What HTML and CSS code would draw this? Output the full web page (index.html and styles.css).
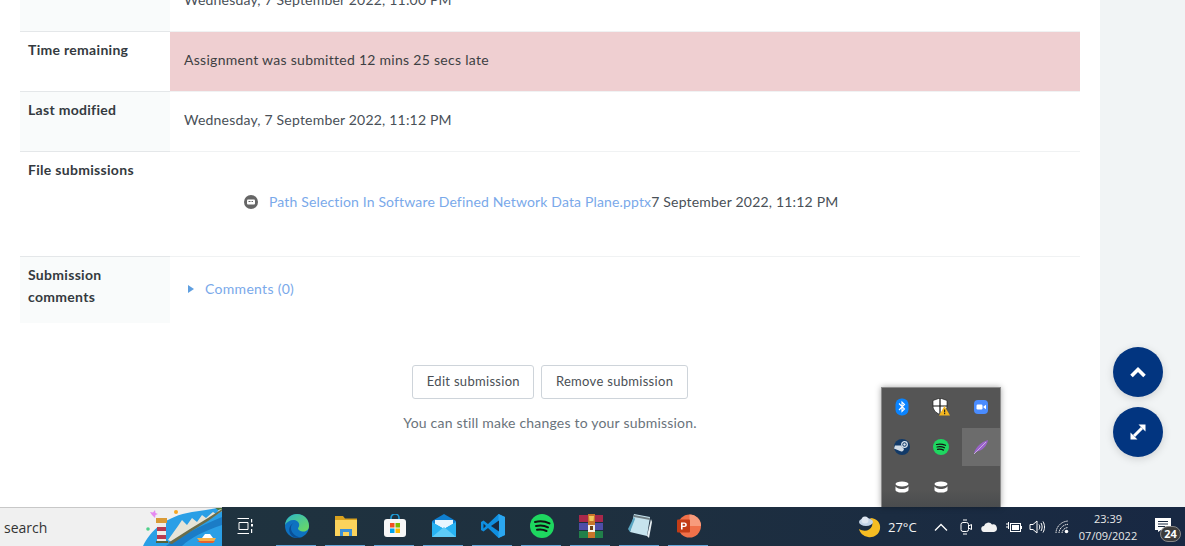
FILE: index.html
```html
<!DOCTYPE html>
<html lang="en">
<head>
    <meta charset="UTF-8">
    <title>Assignment submission</title>
    <link rel="stylesheet" href="styles.css">
</head>
<body>
    <div class="page">
        <div class="content">
            <table class="status">
                <tr class="row-first">
                    <th class="tint"></th>
                    <td>Wednesday, 7 September 2022, 11:00 PM</td>
                </tr>
                <tr>
                    <th>Time remaining</th>
                    <td class="late">Assignment was submitted 12 mins 25 secs late</td>
                </tr>
                <tr>
                    <th class="tint">Last modified</th>
                    <td>Wednesday, 7 September 2022, 11:12 PM</td>
                </tr>
                <tr class="row-files">
                    <th>File submissions</th>
                    <td>
                        <div class="file">
                            <svg class="file-icon" viewBox="0 0 14 14"><circle cx="7" cy="7" r="7" fill="#666"/><rect x="3" y="4.500" width="8" height="5" rx="1" fill="#fff"/><rect x="4.500" y="6" width="2" height="1" fill="#666"/><rect x="7.500" y="6" width="1.500" height="1" fill="#666"/></svg>
                            <a href="#">Path Selection In Software Defined Network Data Plane.pptx</a><span>7 September 2022, 11:12 PM</span>
                        </div>
                    </td>
                </tr>
                <tr class="row-comments">
                    <th class="tint">Submission<br>comments</th>
                    <td><a class="comments" href="#"><i class="caret"></i>Comments (0)</a></td>
                </tr>
            </table>
            <div class="actions">
                <button>Edit submission</button>
                <button>Remove submission</button>
            </div>
            <p class="hint">You can still make changes to your submission.</p>
        </div>
        <div class="side"></div>
    </div>

    <a class="fab fab-top" href="#"><svg viewBox="0 0 16 12" width="16" height="12"><path d="M1.500 10 8 3.500l6.500 6.500" fill="none" stroke="#fff" stroke-width="3.600"/></svg></a>
    <a class="fab fab-expand" href="#"><svg viewBox="0 0 16 16" width="16" height="16"><path d="M4 12 12 4" stroke="#fff" stroke-width="3"/><path d="M8.500 .500H15.500V7.500zM.500 8.500V15.500H7.500z" fill="#fff"/></svg></a>

    <div class="tray-popup">
        <div class="tray-cell"><svg viewBox="0 0 14 18" width="14" height="18"><rect width="13" height="17" x=".5" y=".5" rx="6" fill="#0a84ff"/><path d="M4 5.500 9.500 11 7 13.500V4L9.500 6.500 4 12" fill="none" stroke="#fff" stroke-width="1.100"/></svg></div>
        <div class="tray-cell"><svg viewBox="0 0 18 18" width="18" height="18"><path d="M7 0 14 2.500V8C14 12 11 15 7 16.500 3 15 0 12 0 8V2.500z" fill="#fff" stroke="#111" stroke-width=".6" transform="translate(1 0)"/><path d="M8 0V16M1 8H15" stroke="#111" stroke-width="1.200"/><path d="M12.500 8 18 17.500H7z" fill="#f3b61f"/><rect x="12" y="11.500" width="1.200" height="3" fill="#222"/><rect x="12" y="15" width="1.200" height="1.200" fill="#222"/></svg></div>
        <div class="tray-cell"><svg viewBox="0 0 14 14" width="14" height="14"><rect width="14" height="14" rx="4" fill="#4a8cff"/><rect x="2.500" y="4.500" width="6" height="5" rx="1.200" fill="#fff"/><path d="M9.500 6.500 12 4.800V9.200L9.500 7.500z" fill="#fff"/></svg></div>
        <div class="tray-cell"><svg viewBox="0 0 16 16" width="16" height="16"><circle cx="8" cy="8" r="8" fill="#123a68"/><path d="M0 9.500 6 12a2.600 2.600 0 0 0 4-2L7 6.500 1 6.500z" fill="#e8eef4" opacity=".9"/><circle cx="10.500" cy="5.500" r="2.800" fill="none" stroke="#dfe8f0" stroke-width="1.200"/><circle cx="10.500" cy="5.500" r="1.200" fill="#dfe8f0"/></svg></div>
        <div class="tray-cell"><svg viewBox="0 0 16 16" width="16" height="16"><circle cx="8" cy="8" r="8" fill="#1ed760"/><path d="M3.500 5.500C6.500 4.700 9.500 5 12.500 6.300M4 8C6.500 7.400 9 7.600 11.500 8.800M4.500 10.400C6.500 10 8.500 10.100 10.500 11.100" fill="none" stroke="#121212" stroke-width="1.200" stroke-linecap="round"/></svg></div>
        <div class="tray-cell tray-active"><svg viewBox="0 0 16 16" width="16" height="16"><path d="M1 14C3 8 8 3 15 1 14 7 9 12 4 12.500z" fill="#9a63c9"/><path d="M1 15 13 3" stroke="#d8bff0" stroke-width=".8"/></svg></div>
        <div class="tray-cell"><svg class="db" viewBox="0 0 14 12" width="14" height="12"><ellipse cx="7" cy="3" rx="6.500" ry="2.600" fill="#fff"/><path d="M.500 5v4c0 1.500 3 2.600 6.500 2.600s6.500-1.100 6.500-2.600V5c0 1.500-3 3-6.500 3S.500 6.500.500 5z" fill="#fff"/></svg></div>
        <div class="tray-cell"><svg class="db" viewBox="0 0 14 12" width="14" height="12"><ellipse cx="7" cy="3" rx="6.500" ry="2.600" fill="#fff"/><path d="M.500 5v4c0 1.500 3 2.600 6.500 2.600s6.500-1.100 6.500-2.600V5c0 1.500-3 3-6.500 3S.500 6.500.500 5z" fill="#fff"/></svg></div>
    </div>

    <div class="taskbar">
        <div class="search">
            <span>search</span>
            <svg class="beach" viewBox="0 0 80 39" width="80" height="39">
                <path d="M1 39C8 24 24 9 50 5 62 3 72 2 80 0V39z" fill="#2a9fe6"/>
                <path d="M24 39C36 30 56 20 80 10V18C62 24 48 31 40 39z" fill="#1b7cc6"/>
                <path d="M26 33 36 19 40 13 45 18 50 11 55 15 60 8 64 11 71 5 74 7 78 1 80 2V4L66 13 48 24 30 35z" fill="#e6e4d8"/>
                <path d="M26 36 48 22 66 11 80 2V4L66 14 48 25 30 37z" fill="#6b6d4a"/>
                <path d="M72 0H80V2L76 3z" fill="#4f7a3a"/>
                <rect x="15" y="12" width="9" height="23" fill="#f1ece6"/>
                <rect x="15" y="20" width="9" height="4" fill="#b83a50"/>
                <rect x="15" y="28" width="9" height="4" fill="#b83a50"/>
                <rect x="14" y="11" width="11" height="5" fill="#d99a36"/>
                <rect x="14" y="34" width="12" height="2" fill="#55633a"/>
                <path d="M10 8 8 5 11 5.500 13 3 13.500 6 16 7 13.500 8 13 11 11 9z" fill="#e58af0"/>
                <circle cx="34" cy="5" r="2" fill="#f5a623"/>
                <circle cx="6" cy="22" r="1.800" fill="#4fd08a"/>
                <path d="M55 31H74L71 36H59z" fill="#f7b24a"/>
                <path d="M60 31 63 27H68L71 31z" fill="#fff"/>
                <path d="M55 34H73L71 36H59z" fill="#e8622c"/>
            </svg>
        </div>
        <div class="apps">
            <div class="app app-first"><svg viewBox="0 0 16 16" width="16" height="16"><path d="M0.500 .500H12M0.500 15.500H12M2 4.500H11V11.500H2z" fill="none" stroke="#fff"/><rect x="14" y="1" width="1.200" height="3.500" fill="#fff"/><rect x="14" y="6" width="2" height="2.500" fill="#fff"/><rect x="14" y="11" width="1.200" height="4" fill="#fff"/></svg></div>
            <div class="app on"><svg viewBox="0 0 24 24" width="24" height="24"><defs><linearGradient id="edge" x1="0" y1="0" x2="1" y2="1"><stop offset="0" stop-color="#2cb6c8"/><stop offset="1" stop-color="#6fdc5c"/></linearGradient></defs><circle cx="12" cy="12" r="12" fill="#0e71c0"/><path d="M0 11C1 4 6 0 12 0c7 0 12 5 12 12 0 3-2 5.500-5.500 5.500-3 0-5.500-1.500-5.500-3 0-1 1.200-1.500 1.200-3.500C14.200 7.500 11 6 8.500 6 5 6 1.500 8 0 11z" fill="url(#edge)"/><path d="M9 9c-3 1-4 5-2 9 2 3.500 6 5 9 5.500-5 1.500-9-.5-11-4-2-4-.5-9 4-10.500z" fill="#0a4f96"/></svg></div>
            <div class="app on"><svg viewBox="0 0 24 22" width="24" height="22"><path d="M1 1H9L11 3.500H23V8H1z" fill="#d9a21f"/><rect x="1" y="5" width="22" height="16" fill="#fbd35c"/><path d="M6 21V14H18V21H15V17H9V21z" fill="#3a8fd8"/></svg></div>
            <div class="app on"><svg viewBox="0 0 24 24" width="24" height="24"><path d="M8 6V4a4 4 0 0 1 8 0v2" fill="none" stroke="#1e9bd6" stroke-width="1.600"/><rect x="1" y="5" width="22" height="18" rx="3" fill="#f7f7f7"/><rect x="7" y="9" width="4.500" height="4.500" fill="#f25022"/><rect x="12.500" y="9" width="4.500" height="4.500" fill="#7fba00"/><rect x="7" y="14.500" width="4.500" height="4.500" fill="#00a4ef"/><rect x="12.500" y="14.500" width="4.500" height="4.500" fill="#ffb900"/></svg></div>
            <div class="app on"><svg viewBox="0 0 24 23" width="24" height="23"><path d="M12 0 24 7V9L12 16 0 9V7z" fill="#0f7fd0"/><path d="M3 6H21V10L12 15 3 10z" fill="#e8f6ff"/><path d="M0 8 12 15 24 8V23H0z" fill="#27b2f2"/><path d="M0 23 12 13 24 23z" fill="#5ecbf7"/></svg></div>
            <div class="app on"><svg viewBox="0 0 24 24" width="24" height="24"><path d="M17.500 0 24 3V21L17.500 24 7 14 2.500 17.500 0 16V8L2.500 6.500 7 10z" fill="#0f8fe0"/><path d="M17.500 0 24 3V21L17.500 24z" fill="#2ba6ef"/><path d="M18 6.500V17.500L10 12z" fill="#1b1f2d" opacity=".9"/><path d="M2.500 9.500V14.500L5 12z" fill="#1b2a3c"/></svg></div>
            <div class="app on"><svg viewBox="0 0 24 24" width="24" height="24"><circle cx="12" cy="12" r="12" fill="#1ed760"/><path d="M5 8C10 6.700 15 7.200 19.500 9.400M6 12C10 11 14.500 11.400 18 13.300M7 15.800C10.500 15.100 13.500 15.500 16.500 17" fill="none" stroke="#121212" stroke-width="2" stroke-linecap="round"/></svg></div>
            <div class="app on"><svg viewBox="0 0 24 24" width="24" height="24"><rect width="24" height="7" y="1" fill="#a8284a"/><rect width="24" height="7" y="9" fill="#4f4da8"/><rect width="24" height="7" y="17" fill="#21804a"/><rect x="9" y="0" width="7" height="24" fill="#c9752a"/><path d="M10 2H15L14.500 7H10.500z" fill="#f0c75c"/><rect x="9" y="11" width="7" height="7" fill="#f3efe4"/><rect x="11" y="12" width="3" height="4" fill="#6d4018"/></svg></div>
            <div class="app on"><svg viewBox="0 0 24 24" width="24" height="24"><path d="M6 0 22 3 19 22 2 18z" fill="#c7e4ee"/><path d="M6 1 21.500 4 22 6 6 3z" fill="#6f7d82"/><path d="M2 18 0 15 6 3 7 5z" fill="#5ba6c2"/><path d="M19 22 23 5 24 8 21 24z" fill="#e8eff2"/></svg></div>
            <div class="app on"><svg viewBox="0 0 24 24" width="24" height="24"><circle cx="12.500" cy="12" r="11.500" fill="#f0714a"/><path d="M12.500 .500A11.500 11.500 0 0 1 24 12H12.500z" fill="#f79b7c"/><rect x="0" y="5.500" width="13" height="13" rx="1" fill="#c33c16"/><path d="M4 15.500V8.500H7.300C9 8.500 9.800 9.500 9.800 10.700 9.800 12 9 13 7.300 13H5.600V15.500zM5.600 9.800V11.700H7C7.800 11.700 8.200 11.300 8.200 10.700 8.200 10.200 7.800 9.800 7 9.800z" fill="#fff"/></svg></div>
        </div>
        <div class="systray">
            <svg class="weather" viewBox="0 0 24 24" width="24" height="24"><path d="M13 3C20 3 24 8 23 14 22 20 16 23 11 22 6 21 3 18 2 14 7 17 13 16 15 11 16 8 15 5 13 3z" fill="#f6bd23"/><ellipse cx="9" cy="7" rx="7" ry="4" fill="#c3d3e6"/><circle cx="8" cy="5" r="3.500" fill="#dfe7f1"/></svg>
            <span class="temp">27°C</span>
            <svg class="tray-icon chevron" viewBox="0 0 14 8" width="14" height="8"><path d="M1 7.500 7 1.500l6 6" fill="none" stroke="#fff" stroke-width="1.300"/></svg>
            <svg class="tray-icon" viewBox="0 0 12 16" width="12" height="16"><rect x="1" y="3.500" width="7.500" height="9" rx="2" fill="none" stroke="#fff"/><path d="M8.500 7 11.500 5.500V10.500L8.500 9z" fill="none" stroke="#fff"/><path d="M3 1H7M3 15H7" stroke="#fff"/></svg>
            <svg class="tray-icon" viewBox="0 0 16 10" width="16" height="10"><path d="M3.500 10A3 3 0 0 1 3 4 4.500 4.500 0 0 1 11 2.500 3.700 3.700 0 0 1 13 10z" fill="#f2f2f2"/></svg>
            <svg class="tray-icon battery" viewBox="0 0 16 12" width="16" height="12"><path d="M0 3H2.500M0 6H2.500M2.500 1V8" stroke="#fff"/><rect x="4.500" y="2.500" width="10" height="8" fill="none" stroke="#fff"/><rect x="6" y="4" width="7" height="5" fill="#fff"/><rect x="15" y="5" width="1" height="3" fill="#fff"/></svg>
            <svg class="tray-icon speaker" viewBox="0 0 16 14" width="16" height="14"><path d="M1 4.500H4L8 1V13L4 9.500H1z" fill="none" stroke="#fff"/><path d="M10 4.500C11 6 11 8 10 9.500M12 3C13.500 5.500 13.500 8.500 12 11M14 1.500C16 5 16 9 14 12.500" fill="none" stroke="#fff"/></svg>
            <svg class="tray-icon wifi" viewBox="0 0 14 14" width="14" height="14"><path d="M1 13C1 7 6 1.500 13 1M4 13C4 9 8 4.500 13 4.300M7 13C7 10.500 9.500 7.700 13 7.500" fill="none" stroke="#e8e8e8" stroke-dasharray="1.500 .6"/><circle cx="11.500" cy="11.500" r="1.800" fill="#fff"/></svg>
            <div class="clock"><span>23:39</span><span>07/09/2022</span></div>
            <div class="notify">
                <svg viewBox="0 0 16 14" width="16" height="14"><path d="M0 0H16V12H6L3 14V12H0z" fill="#fff"/><path d="M3 3.500H13M3 6H13M3 8.500H10" stroke="#1b2b42"/></svg>
                <span class="badge">24</span>
            </div>
        </div>
    </div>
</body>
</html>
```

FILE: styles.css
```css
* {
    box-sizing: border-box;
}
body {
    margin: 0;
    height: 546px;
    overflow: hidden;
    display: flex;
    flex-direction: column;
    position: relative;
    font-family: "Lato", "Noto Sans", sans-serif;
    font-size: 14px;
    letter-spacing: 0.2px;
    color: #495057;
    background: #fff;
}
a {
    color: #7aa9ea;
    text-decoration: none;
}
.page {
    display: flex;
    height: 507px;
    overflow: hidden;
}
.content {
    width: 1100px;
    padding: 0 20px;
}
.side {
    flex: 1;
    background: #f1f4f5;
}

/* status table */
.status {
    width: 1060px;
    margin-top: -28px;
    border-collapse: collapse;
    table-layout: fixed;
}
.status tr {
    height: 60px;
}
.status th {
    width: 150px;
    padding: 7px 8px 9px;
    text-align: left;
    vertical-align: top;
    line-height: 22px;
    font-weight: 700;
    letter-spacing: 0.3px;
    color: #343a40;
    border-bottom: 1px solid #e4e7e9;
}
.status th.tint {
    background: #f9fbfb;
}
.status td {
    padding: 0 14px 4px;
    border-bottom: 1px solid #f0f2f3;
}
.status tr:last-child th,
.status tr:last-child td {
    border-bottom: none;
}
.status .late {
    background: #efcfd1;
    color: #3d3f43;
    letter-spacing: 0.28px;
}
.status .row-first {
    height: 59px;
}
.status .row-files {
    height: 105px;
}
.status .row-comments {
    height: 67px;
}
.file {
    display: flex;
    align-items: center;
    margin: 0 0 0 60px;
    white-space: nowrap;
}
.file a {
    letter-spacing: 0.15px;
}
.file-icon {
    width: 14px;
    height: 14px;
    margin-right: 11px;
}
.comments {
    display: flex;
    align-items: center;
    margin-top: 2px;
    letter-spacing: 0.3px;
}
.caret {
    width: 0;
    height: 0;
    margin: 0 11px 0 4px;
    border-left: 6px solid #5f9fe0;
    border-top: 4.500px solid transparent;
    border-bottom: 4.500px solid transparent;
}

/* buttons below the table */
.actions {
    display: flex;
    justify-content: center;
    gap: 7px;
    margin-top: 42px;
}
.actions button {
    height: 34px;
    padding: 0 13.500px 2px;
    border: 1px solid #ced4da;
    border-radius: 3px;
    background: #fff;
    font: inherit;
    font-size: 13px;
    letter-spacing: 0.3px;
    color: #4a4f55;
}
.hint {
    margin: 15px 0 0;
    text-align: center;
    color: #6a737b;
}

/* floating buttons */
.fab {
    position: absolute;
    left: 1113px;
    width: 50px;
    height: 50px;
    border-radius: 50%;
    background: #023580;
    box-shadow: 0 2px 8px rgba(0, 0, 0, 0.15);
    display: flex;
    align-items: center;
    justify-content: center;
}
.fab-top {
    top: 347px;
}
.fab-expand {
    top: 407px;
}

/* tray popup */
.tray-popup {
    position: absolute;
    left: 881px;
    top: 387px;
    width: 120px;
    height: 120px;
    display: grid;
    grid-template-columns: 39px 40px 39px;
    grid-auto-rows: 40px;
    align-content: start;
    background: linear-gradient(#555 0%, #555 85%, #4a4c4e 100%);
    border: 1px solid #8a8a8a;
    border-bottom: none;
    box-shadow: 0 0 6px rgba(0, 0, 0, 0.35);
}
.tray-cell {
    margin-bottom: 2px;
    display: flex;
    align-items: center;
    justify-content: center;
}
.tray-active {
    margin-left: 1px;
    background: #6c6c6c;
}

/* taskbar */
.taskbar {
    height: 39px;
    display: flex;
    background: linear-gradient(90deg, #20343f, #1e303f 50%, #182843);
    color: #fff;
}
.search {
    width: 222px;
    display: flex;
    align-items: center;
    justify-content: space-between;
    padding-left: 4px;
    background: #f0f0f0;
    border-top: 1px solid #c8c8c8;
    font-family: "Open Sans", sans-serif;
    font-size: 14px;
    letter-spacing: 0;
    color: #333;
    overflow: hidden;
}
.beach {
    flex: none;
    margin-top: -1px;
}
.apps {
    display: flex;
}
.app {
    width: 49px;
    display: flex;
    align-items: center;
    justify-content: center;
    padding-bottom: 2px;
    position: relative;
}
.app-first {
    width: 50px;
    padding-right: 4px;
}
.app.on::after {
    content: "";
    position: absolute;
    left: 4px;
    right: 5px;
    bottom: 0;
    height: 1px;
    background: #66a9dc;
}
.systray {
    flex: 1;
    display: flex;
    align-items: center;
    justify-content: flex-end;
    font-family: "Open Sans", sans-serif;
    letter-spacing: 0;
}
.weather {
    margin-right: 7px;
}
.temp {
    width: 32px;
    margin-right: 14px;
    font-size: 13px;
    color: #f2f2f2;
}
.tray-icon {
    flex: none;
    margin-right: 9px;
}
.chevron {
    margin-right: 12px;
}
.battery {
    margin-right: 7px;
}
.speaker {
    margin-right: 10px;
}
.wifi {
    margin-right: 10px;
}
.clock {
    width: 58px;
    display: flex;
    flex-direction: column;
    align-items: center;
    font-size: 11px;
    line-height: 17px;
    color: #e8e8e8;
}
.notify {
    width: 48px;
    height: 39px;
    display: flex;
    align-items: center;
    justify-content: flex-end;
    padding: 0 14px 4px 0;
    position: relative;
}
.badge {
    position: absolute;
    right: 4px;
    bottom: 4px;
    width: 21px;
    height: 16px;
    border-radius: 8px;
    background: #3c3c3c;
    border: 1px solid #888;
    font-size: 11px;
    font-weight: 700;
    line-height: 14px;
    text-align: center;
}
```
